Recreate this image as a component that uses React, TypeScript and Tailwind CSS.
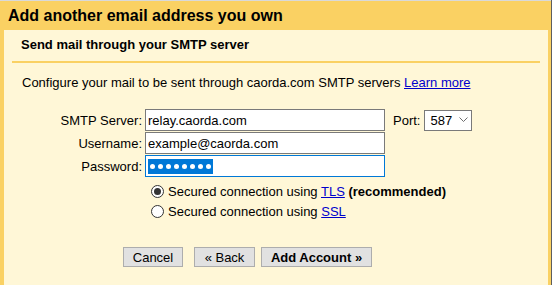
export default function App() {
  return (
    <div className="flex w-[552px] h-[285px] overflow-hidden font-['Liberation_Sans',Arial,sans-serif] text-black">
      <div className="flex-1 flex flex-col bg-[#fad163] border-t border-[#d9d9d9] pl-1 pr-[3px]">
        <h1 className="h-[29px] shrink-0 pl-1 pt-[6px] text-[16px] leading-[18px] font-bold">
          Add another email address you own
        </h1>

        <div className="flex-1 bg-[#fff7d7] px-2 pt-[7px] text-[13px] leading-[15px]">
          {/* section heading */}
          <div className="pl-[9px] pb-[9px] border-b-2 border-[#fad163] font-bold">
            Send mail through your SMTP server
          </div>

          <p className="mt-[12px] pl-[10px]">
            Configure your mail to be sent through caorda.com SMTP servers{" "}
            <a href="#" className="text-[#0000cc] underline">Learn more</a>
          </p>

          {/* form */}
          <div className="mt-[19px] flex flex-col gap-px">
            <div className="flex items-center">
              <label className="w-[130px] text-right">SMTP Server:</label>
              <input
                readOnly
                value="relay.caorda.com"
                className="ml-[3px] w-[240px] h-[22px] px-[2px] bg-white border border-[#7a7a7a] outline-none"
              />
              <span className="ml-2">Port:</span>
              <div className="ml-1 w-[48px] h-[21px] flex items-center justify-between pl-[5px] pr-[3px] bg-white border border-[#7a7a7a]">
                <span>587</span>
                <svg width="9" height="6" viewBox="0 0 9 6" fill="none">
                  <path d="M0.5 0.5 L4.5 4.5 L8.5 0.5" stroke="#6d6d6d" strokeWidth="1" />
                </svg>
              </div>
            </div>

            <div className="flex items-center">
              <label className="w-[130px] text-right">Username:</label>
              <input
                readOnly
                value="example@caorda.com"
                className="ml-[3px] w-[240px] h-[22px] px-[2px] bg-white border border-[#7a7a7a] outline-none"
              />
            </div>

            <div className="flex items-center">
              <label className="w-[130px] text-right">Password:</label>
              <div className="ml-[3px] w-[240px] h-[22px] px-[2px] flex items-center bg-white border border-[#0078d7]">
                <span className="h-[15px] px-[2px] flex items-center gap-[3px] bg-[#0078d7]">
                  {Array.from({ length: 8 }).map((_, i) => (
                    <span key={i} className="w-[5px] h-[5px] rounded-full bg-white" />
                  ))}
                </span>
              </div>
            </div>
          </div>

          {/* security */}
          <div className="mt-[4px] pl-[139px] flex flex-col">
            <label className="h-[20px] flex items-center gap-1">
              <span className="w-[13px] h-[13px] rounded-full border border-[#333] bg-white flex items-center justify-center">
                <span className="w-[7px] h-[7px] rounded-full bg-[#333]" />
              </span>
              <span>
                Secured connection using <a href="#" className="text-[#0000cc] underline">TLS</a>{" "}
                <b>(recommended)</b>
              </span>
            </label>
            <label className="h-[20px] flex items-center gap-1">
              <span className="w-[13px] h-[13px] rounded-full border border-[#333] bg-white" />
              <span>
                Secured connection using <a href="#" className="text-[#0000cc] underline">SSL</a>
              </span>
            </label>
          </div>

          {/* actions */}
          <div className="mt-[26px] pl-[111px] flex">
            <button className="w-[60px] h-[20px] bg-[#e1e1e1] border border-[#adadad]">Cancel</button>
            <button className="ml-[11px] w-[61px] h-[20px] bg-[#e1e1e1] border border-[#adadad]">« Back</button>
            <button className="ml-[6px] w-[111px] h-[20px] bg-[#e1e1e1] border border-[#adadad] font-bold">
              Add Account »
            </button>
          </div>
        </div>
      </div>
      <div className="w-px bg-[#5e5e5e]" />
    </div>
  );
}
